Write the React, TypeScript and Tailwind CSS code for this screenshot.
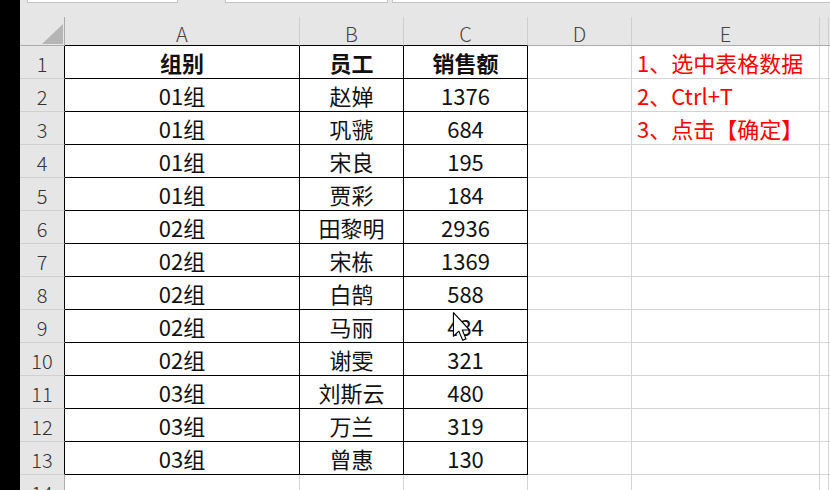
import React from 'react';

const rows: [string, string, string][] = [
    ['01组', '赵婵', '1376'],
    ['01组', '巩虢', '684'],
    ['01组', '宋良', '195'],
    ['01组', '贾彩', '184'],
    ['02组', '田黎明', '2936'],
    ['02组', '宋栋', '1369'],
    ['02组', '白鹄', '588'],
    ['02组', '马丽', '434'],
    ['02组', '谢雯', '321'],
    ['03组', '刘斯云', '480'],
    ['03组', '万兰', '319'],
    ['03组', '曾惠', '130'],
];

const notes = ['1、选中表格数据', '2、Ctrl+T', '3、点击【确定】'];

const cols = ['A', 'B', 'C', 'D', 'E', ''];

const App: React.FC = () => {
    // 表の行: 見出し + データ
    const table: [string, string, string][] = [['组别', '员工', '销售额'], ...rows];

    return (
        <div
            className="w-[830px] h-[490px] overflow-hidden flex bg-white relative"
            style={{ fontFamily: '"Noto Sans CJK SC", "Noto Sans", sans-serif' }}
        >
            {/* Left black strip */}
            <div className="w-[20px] h-full bg-black shrink-0"></div>

            <div className="flex-1 flex flex-col">
                {/* Top strip */}
                <div className="h-[17px] shrink-0 bg-[#e6e6e6] flex items-start">
                    <div className="w-[7px]"></div>
                    <div className="w-[151px] h-[3px] bg-white border-b border-r border-l border-[#c4c4c4]"></div>
                    <div className="w-[47px]"></div>
                    <div className="w-[163px] h-[3px] bg-white border-b border-r border-l border-[#c4c4c4]"></div>
                    <div className="w-[4px]"></div>
                    <div className="flex-1 h-[3px] bg-white border-b border-l border-[#c4c4c4]"></div>
                </div>

                {/* Sheet grid */}
                <div className="shrink-0 grid grid-cols-[45px_235px_104px_124px_104px_188px_9px_1fr] grid-rows-[29px] auto-rows-[33px] text-[22px] leading-none">
                    {/* Column header row */}
                    <div className="bg-[#e6e6e6] border-r border-b border-[#ababab] relative">
                        <svg width="21" height="20" viewBox="0 0 21 20" className="absolute left-[22px] top-[7px]">
                            <polygon points="21,0 21,20 0,20" fill="#b5b5b5" />
                        </svg>
                    </div>
                    {cols.map((c, i) => (
                        <div
                            key={'h' + i}
                            className={
                                'bg-[#e6e6e6] border-r border-[#cfcfcf] flex items-center justify-center pt-[6px] text-[20px] text-[#444] font-light ' +
                                (i < 3 ? 'border-b border-b-black' : 'border-b border-b-[#ababab]')
                            }
                        >
                            {c}
                        </div>
                    ))}
                    <div className="bg-[#e6e6e6] border-b border-[#ababab]"></div>

                    {/* Data rows 1-14 */}
                    {Array.from({ length: 14 }).map((_, r) => {
                        const inTable = r < 13;
                        const data = inTable ? table[r] : null;
                        return (
                            <React.Fragment key={r}>
                                <div
                                    className={
                                        'bg-[#e6e6e6] border-b border-[#d0d0d0] flex items-center justify-center pt-[3px] text-[20px] text-[#333] font-light ' +
                                        (inTable ? 'border-r border-r-black' : 'border-r border-r-[#ababab]')
                                    }
                                >
                                    {r + 1}
                                </div>
                                {[0, 1, 2].map(c => (
                                    <div
                                        key={c}
                                        className={
                                            'flex items-center justify-center text-[#111] ' +
                                            (inTable ? 'border-r border-b border-black ' : 'border-r border-b border-[#d4d4d4] ') +
                                            (r === 0 ? 'font-bold' : '')
                                        }
                                    >
                                        {data ? data[c] : ''}
                                    </div>
                                ))}
                                <div className="border-r border-b border-[#d4d4d4]"></div>
                                <div className="border-r border-b border-[#d4d4d4] flex items-center pl-[5px] text-[#ff0000] whitespace-nowrap">
                                    {notes[r] ?? ''}
                                </div>
                                <div className="border-r border-b border-[#d4d4d4]"></div>
                                <div className="border-b border-[#d4d4d4]"></div>
                            </React.Fragment>
                        );
                    })}
                </div>
            </div>

            {/* Mouse cursor */}
            <svg width="20" height="30" viewBox="0 0 13 21" className="absolute left-[452px] top-[312px]">
                <path
                    d="M0.5 0.5 L0.5 17 L4.3 13.4 L7 19.8 L9.3 18.8 L6.7 12.6 L11.8 12.6 Z"
                    fill="white"
                    stroke="black"
                    strokeWidth="0.8"
                    strokeLinejoin="round"
                />
            </svg>
        </div>
    );
};

export default App;
